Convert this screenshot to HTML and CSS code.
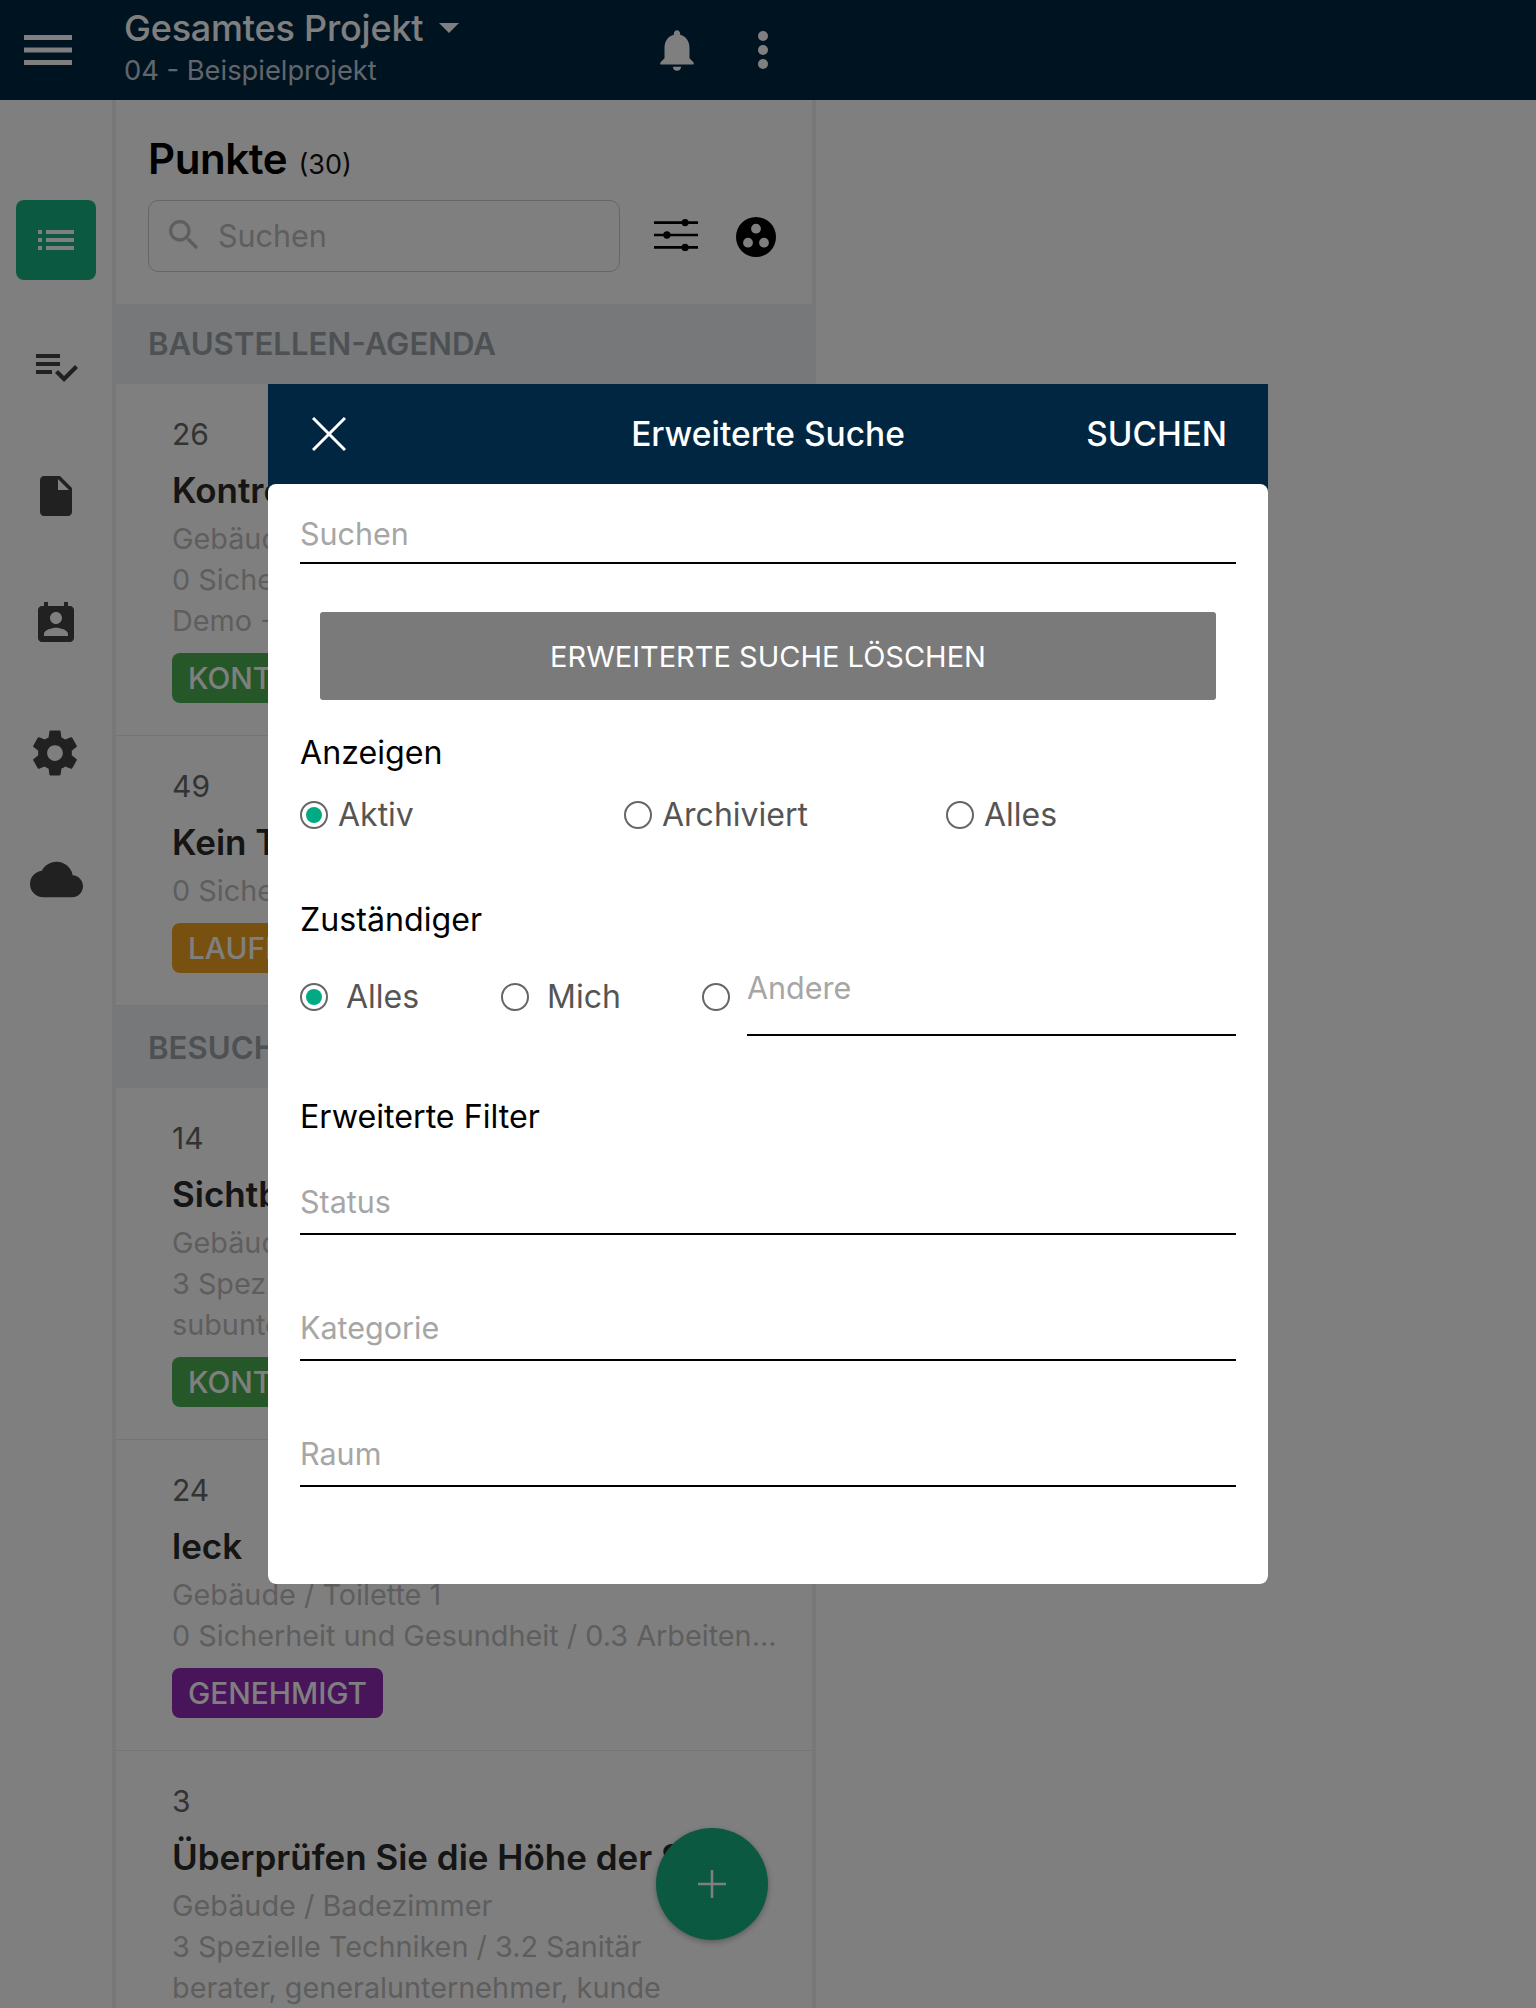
FILE: index.html
```html
<!DOCTYPE html>
<html lang="de">
<head>
<meta charset="utf-8">
<title>Erweiterte Suche</title>
<link rel="stylesheet" href="styles.css">
</head>
<body>
<div class="app">
  <header class="topbar">
    <svg class="menu-icon" viewBox="0 0 48 30"><path d="M0 0h48v5H0zM0 12.500h48v5H0zM0 25h48v5H0z"/></svg>
    <div class="project">
      <div class="project-name"><span>Gesamtes Projekt</span><span class="caret"></span></div>
      <div class="project-sub">04 - Beispielprojekt</div>
    </div>
    <svg class="bell-icon" viewBox="0 0 24 24"><path d="M12 22c1.100 0 2-.9 2-2h-4c0 1.100.9 2 2 2zm6-6v-5c0-3.070-1.630-5.640-4.500-6.320V4c0-.83-.67-1.500-1.500-1.500s-1.500.67-1.500 1.500v.68C7.640 5.360 6 7.920 6 11v5l-2 2v1h16v-1l-2-2z"/></svg>
    <svg class="dots-icon" viewBox="0 0 10 38"><circle cx="5" cy="5" r="5"/><circle cx="5" cy="19" r="5"/><circle cx="5" cy="33" r="5"/></svg>
  </header>
  <div class="main">
    <nav class="rail">
      <div class="rail-item rail-active"><svg viewBox="0 0 24 24"><path d="M3 13h2v-2H3v2zm0 4h2v-2H3v2zm0-8h2V7H3v2zm4 4h14v-2H7v2zm0 4h14v-2H7v2zM7 7v2h14V7H7z"/></svg></div>
      <div class="rail-item rail-check"><svg viewBox="0 0 24 24"><path d="M14 10H2v2h12v-2zm0-4H2v2h12V6zM2 16h8v-2H2v2zm19.500-4.500L23 13l-6.990 7-4.510-4.500L13 14l3.010 3 5.490-5.500z"/></svg></div>
      <div class="rail-item"><svg viewBox="0 0 24 24"><path d="M6 2c-1.100 0-1.990.9-1.990 2L4 20c0 1.100.89 2 1.990 2H18c1.100 0 2-.9 2-2V8l-6-6H6zm7 7V3.500L18.500 9H13z"/></svg></div>
      <div class="rail-item rail-contact"><svg viewBox="0 0 24 24"><path d="M19 3h-1V1h-2v2H8V1H6v2H5c-1.110 0-2 .9-2 2v14c0 1.100.89 2 2 2h14c1.100 0 2-.9 2-2V5c0-1.100-.9-2-2-2zm-7 3c1.660 0 3 1.340 3 3s-1.340 3-3 3-3-1.340-3-3 1.340-3 3-3zm6 12H6v-1c0-2 4-3.100 6-3.100s6 1.100 6 3.100v1z"/></svg></div>
      <div class="rail-item rail-gear"><svg viewBox="0 0 24 24"><path d="M19.430 12.980c.04-.32.07-.64.07-.98s-.03-.66-.07-.98l2.110-1.650c.19-.15.24-.42.12-.64l-2-3.460c-.12-.22-.39-.3-.61-.22l-2.490 1c-.52-.4-1.080-.73-1.690-.98l-.38-2.650C14.460 2.180 14.250 2 14 2h-4c-.25 0-.46.18-.49.42l-.38 2.650c-.61.25-1.170.59-1.690.98l-2.490-1c-.23-.09-.49 0-.61.22l-2 3.460c-.13.22-.07.49.12.64l2.110 1.650c-.04.32-.07.65-.07.98s.03.66.07.98l-2.110 1.650c-.19.15-.24.42-.12.64l2 3.460c.12.22.39.3.61.22l2.490-1c.52.4 1.080.73 1.690.98l.38 2.650c.03.24.24.42.49.42h4c.25 0 .46-.18.49-.42l.38-2.650c.61-.25 1.170-.59 1.690-.98l2.490 1c.23.09.49 0 .61-.22l2-3.460c.12-.22.07-.49-.12-.64l-2.110-1.650zM12 15.500c-1.930 0-3.500-1.570-3.500-3.500s1.570-3.500 3.500-3.500 3.500 1.570 3.500 3.500-1.570 3.500-3.500 3.500z"/></svg></div>
      <div class="rail-item rail-cloud"><svg viewBox="0 0 24 24"><path d="M19.350 10.040C18.670 6.590 15.640 4 12 4 9.110 4 6.600 5.640 5.350 8.040 2.340 8.360 0 10.910 0 14c0 3.310 2.690 6 6 6h13c2.760 0 5-2.240 5-5 0-2.640-2.050-4.780-4.650-4.960z"/></svg></div>
    </nav>
    <section class="panel">
      <div class="panel-head">
        <h1 class="panel-title">Punkte <small>(30)</small></h1>
        <div class="tools">
          <div class="searchbox">
            <svg class="search-icon" viewBox="0 0 24 24"><path d="M15.500 14h-.79l-.28-.27C15.410 12.590 16 11.110 16 9.500 16 5.910 13.090 3 9.500 3S3 5.910 3 9.500 5.910 16 9.500 16c1.610 0 3.090-.59 4.230-1.570l.27.28v.79l5 4.990L20.490 19l-4.990-5zm-6 0C7.010 14 5 11.990 5 9.500S7.010 5 9.500 5 14 7.010 14 9.500 11.990 14 9.500 14z"/></svg>
            <span>Suchen</span>
          </div>
          <svg class="sliders-icon" viewBox="0 1 46 34"><path d="M0 5h46M0 18h46M0 31h46" fill="none" stroke="#000" stroke-width="2.800"/><circle cx="32.500" cy="5" r="3.800"/><circle cx="13.500" cy="18" r="3.800"/><circle cx="32.500" cy="31" r="3.800"/></svg>
          <svg class="palette-icon" viewBox="0 0 40 40"><path fill-rule="evenodd" d="M20 0a20 20 0 1 0 0 40a20 20 0 1 0 0-40zM20 6.800a4.900 4.900 0 1 1 0 9.800a4.900 4.900 0 1 1 0-9.800zM12 20.800a4.900 4.900 0 1 1 0 9.800a4.900 4.900 0 1 1 0-9.800zM28 20.800a4.900 4.900 0 1 1 0 9.800a4.900 4.900 0 1 1 0-9.800z"/></svg>
        </div>
      </div>

      <div class="group-title">BAUSTELLEN-AGENDA</div>
      <article class="card">
        <div class="num">26</div>
        <div class="name">Kontrollieren</div>
        <div class="sub">Gebäude</div>
        <div class="sub">0 Sicherheit</div>
        <div class="sub">Demo - Test</div>
        <span class="badge badge-green">KONTROLLE</span>
      </article>
      <article class="card">
        <div class="num">49</div>
        <div class="name">Kein Titel</div>
        <div class="sub">0 Sicherheit</div>
        <span class="badge badge-orange">LAUFEND</span>
      </article>
      <div class="group-title group-title-tall">BESUCH</div>
      <article class="card">
        <div class="num">14</div>
        <div class="name">Sichtbar</div>
        <div class="sub">Gebäude</div>
        <div class="sub">3 Spezielle</div>
        <div class="sub">subunternehmer</div>
        <span class="badge badge-green">KONTROLLE</span>
      </article>
      <article class="card">
        <div class="num">24</div>
        <div class="name">leck</div>
        <div class="sub">Gebäude / Toilette 1</div>
        <div class="sub">0 Sicherheit und Gesundheit / 0.3 Arbeiten...</div>
        <span class="badge badge-purple">GENEHMIGT</span>
      </article>
      <article class="card">
        <div class="num">3</div>
        <div class="name">Überprüfen Sie die Höhe der S...</div>
        <div class="sub">Gebäude / Badezimmer</div>
        <div class="sub">3 Spezielle Techniken / 3.2 Sanitär</div>
        <div class="sub">berater, generalunternehmer, kunde</div>
      </article>
    </section>
  </div>
  <button class="fab"><svg viewBox="0 0 28 28"><path d="M14 0v28M0 14h28" stroke="#fff" stroke-width="2.500" fill="none"/></svg></button>
  <div class="scrim"></div>

  <div class="modal">
    <div class="modal-head">
      <svg class="close-icon" viewBox="0 0 34 34"><path d="M1 1l32 32M33 1L1 33" stroke="#fff" stroke-width="3" fill="none"/></svg>
      <div class="modal-title">Erweiterte Suche</div>
      <div class="modal-action">SUCHEN</div>
    </div>
    <div class="modal-body">
      <div class="field field-search">Suchen</div>
      <button class="clear-btn">ERWEITERTE SUCHE LÖSCHEN</button>
      <div class="label label-show">Anzeigen</div>
      <div class="radios radios-show">
        <label class="radio radio-aktiv"><i class="dot on"></i>Aktiv</label>
        <label class="radio radio-arch"><i class="dot"></i>Archiviert</label>
        <label class="radio"><i class="dot"></i>Alles</label>
      </div>
      <div class="label label-owner">Zuständiger</div>
      <div class="radios radios-owner">
        <label class="radio radio-wide radio-alles"><i class="dot on"></i>Alles</label>
        <label class="radio radio-wide radio-mich"><i class="dot"></i>Mich</label>
        <label class="radio radio-wide radio-other"><i class="dot"></i></label>
        <div class="field field-other">Andere</div>
      </div>
      <div class="label label-filter">Erweiterte Filter</div>
      <div class="field field-status">Status</div>
      <div class="field field-next">Kategorie</div>
      <div class="field field-next">Raum</div>
    </div>
  </div>
</div>
</body>
</html>
```
FILE: styles.css
```css
* { box-sizing: border-box; }
html, body { margin: 0; padding: 0; }
body { font-family: Inter, "Liberation Sans", sans-serif; background: #fff; color: #000; }
.app { position: relative; width: 1536px; height: 2008px; overflow: hidden; }

.topbar { height: 100px; background: #012642; display: flex; align-items: center; position: relative; }
.menu-icon { width: 48px; height: 30px; margin-left: 24px; fill: #fff; flex: none; }
.project { margin-left: 52px; width: 528px; height: 100px; }
.project-name { display: flex; align-items: center; color: #fff; font-size: 36px; font-weight: 500; height: 36px; margin-top: 10px; letter-spacing: -.2px; }
.caret { width: 0; height: 0; margin-left: 16px; border-left: 10px solid transparent; border-right: 10px solid transparent; border-top: 10px solid #fff; }
.project-sub { color: #c0ccd6; font-size: 27.300px; line-height: 36px; margin-top: 7px; }
.bell-icon { width: 50px; height: 50px; fill: #fff; flex: none; }
.dots-icon { width: 10px; height: 38px; fill: #fff; margin-left: 56px; flex: none; }

.main { display: flex; }
.rail { width: 116px; flex: none; border-right: 4px solid #f0f0f0; padding: 100px 0 0 16px; height: 1908px; }
.rail-item { width: 80px; height: 80px; margin-bottom: 48px; display: flex; align-items: center; justify-content: center; border-radius: 8px; }
.rail-item svg { width: 48px; height: 48px; fill: #424242; }
.rail-check { margin-top: -2px; margin-bottom: 50px; }
.rail-contact { margin-top: 1px; margin-bottom: 49px; }
.rail-gear svg { width: 54px; height: 54px; margin-left: -2px; }
.rail-cloud { margin-top: -2px; }
.rail-cloud svg { width: 53px; height: 53px; }
.rail-active { background: #16b280; }
.rail-active svg { width: 48px; height: 48px; fill: #fff; }
.panel { width: 700px; flex: none; border-right: 4px solid #f0f0f0; }
.panel-head { padding: 35px 32px 32px; height: 204px; }
.panel-title { margin: 0; font-size: 42px; line-height: 48px; font-weight: 600; letter-spacing: -.4px; }
.panel-title small { font-size: 27px; font-weight: 400; letter-spacing: 0; color: #111; margin-left: 1px; }
.tools { display: flex; align-items: center; margin-top: 11px; }
.searchbox { width: 472px; height: 72px; border: 1px solid #cccccc; border-radius: 10px; display: flex; align-items: center; padding-left: 15px; color: #bcbcbc; font-size: 30.500px; padding-bottom: 2px; }
.search-icon { width: 40px; height: 40px; fill: #bcbcbc; margin-right: 14px; }
.sliders-icon { width: 44px; height: 34px; margin-left: 34px; margin-bottom: 2px; }
.palette-icon { width: 40px; height: 40px; margin-left: 38px; margin-top: 2px; }
.group-title { height: 80px; background: #edf0f4; color: #9da2a8; font-size: 31.200px; font-weight: 600; line-height: 80px; padding-left: 32px; }
.group-title-tall { height: 82px; line-height: 84px; }
.card { padding: 30px 32px 32px 56px; border-bottom: 1px solid #e8e8e8; }
.num { font-size: 30px; line-height: 40px; color: #666; }
.name { font-size: 35px; font-weight: 600; line-height: 50px; margin-top: 11px; color: #2a2a2a; white-space: nowrap; overflow: hidden; }
.sub { font-size: 28.800px; line-height: 41px; color: #bdbdbd; white-space: nowrap; }
.name + .sub { margin-top: 3px; }
.badge { display: block; width: max-content; height: 50px; line-height: 50px; margin-top: 12px; padding: 0 16px 0 16px; border-radius: 8px; color: #fff; font-size: 29.800px; font-weight: 500; }
.badge-green { background: #4caf50; }
.badge-orange { background: #f0a020; }
.badge-purple { background: #9028b4; }

.fab { position: absolute; left: 656px; top: 1828px; width: 112px; height: 112px; border: 0; padding: 0; border-radius: 50%; background: #16b280; display: flex; align-items: center; justify-content: center; box-shadow: 0 2px 6px rgba(0,0,0,.3); }
.fab svg { width: 28px; height: 28px; }
.scrim { position: absolute; inset: 0; background: rgba(0,0,0,.5); }

.modal { position: absolute; left: 268px; top: 384px; width: 1000px; height: 1200px; display: flex; flex-direction: column; background: #012642; border-radius: 0 0 8px 8px; }
.modal-head { height: 100px; flex: none; display: flex; align-items: center; justify-content: space-between; color: #fff; position: relative; padding: 0 41px 0 44px; }
.close-icon { width: 34px; height: 34px; }
.modal-title { position: absolute; left: 0; right: 0; text-align: center; font-size: 33.500px; font-weight: 500; pointer-events: none; }
.modal-action { font-size: 33.300px; font-weight: 500; }
.modal-body { flex: 1; background: #fff; border-radius: 8px; padding: 0 32px; }
.field { display: flex; align-items: flex-end; border-bottom: 2px solid #000; color: #a6a6a6; font-size: 30.500px; line-height: 40px; padding-bottom: 11px; }
.field-search { height: 80px; padding-bottom: 8px; }
.clear-btn { display: block; width: 896px; height: 88px; margin: 48px 20px 0; border: 0; border-radius: 3px; background: #7a7a7a; color: #fff; font: 400 29px Inter, "Liberation Sans", sans-serif; }
.label { font-size: 32.200px; line-height: 40px; color: #000; }
.label-show { margin-top: 33px; }
.label-owner { margin-top: 65px; }
.label-filter { margin-top: 61px; }
.radios { display: flex; }
.radios-show { margin-top: 22px; height: 40px; }
.radios-owner { margin-top: 27px; height: 69px; align-items: flex-start; }
.radio { display: flex; align-items: center; font-size: 32px; line-height: 40px; color: #555; height: 40px; }
.radio-aktiv { width: 324px; }
.radio-arch { width: 322px; }
.radio-wide { height: 60px; }
.radio-alles { width: 201px; }
.radio-mich { width: 201px; }
.radio-other { width: 45px; }
.radio-wide .dot { margin-right: 18px; }
.dot { width: 28px; height: 28px; border: 2px solid #666; border-radius: 50%; background: #fff; margin-right: 10px; flex: none; display: flex; align-items: center; justify-content: center; }
.dot.on::after { content: ""; width: 16px; height: 16px; border-radius: 50%; background: #00ab84; }
.radio-other .dot { margin-right: 0; }
.field-other { flex: 1; height: 69px; align-items: flex-start; padding-top: 1px; padding-bottom: 0; }
.field-status { height: 98px; }
.field-next { height: 126px; }
```
